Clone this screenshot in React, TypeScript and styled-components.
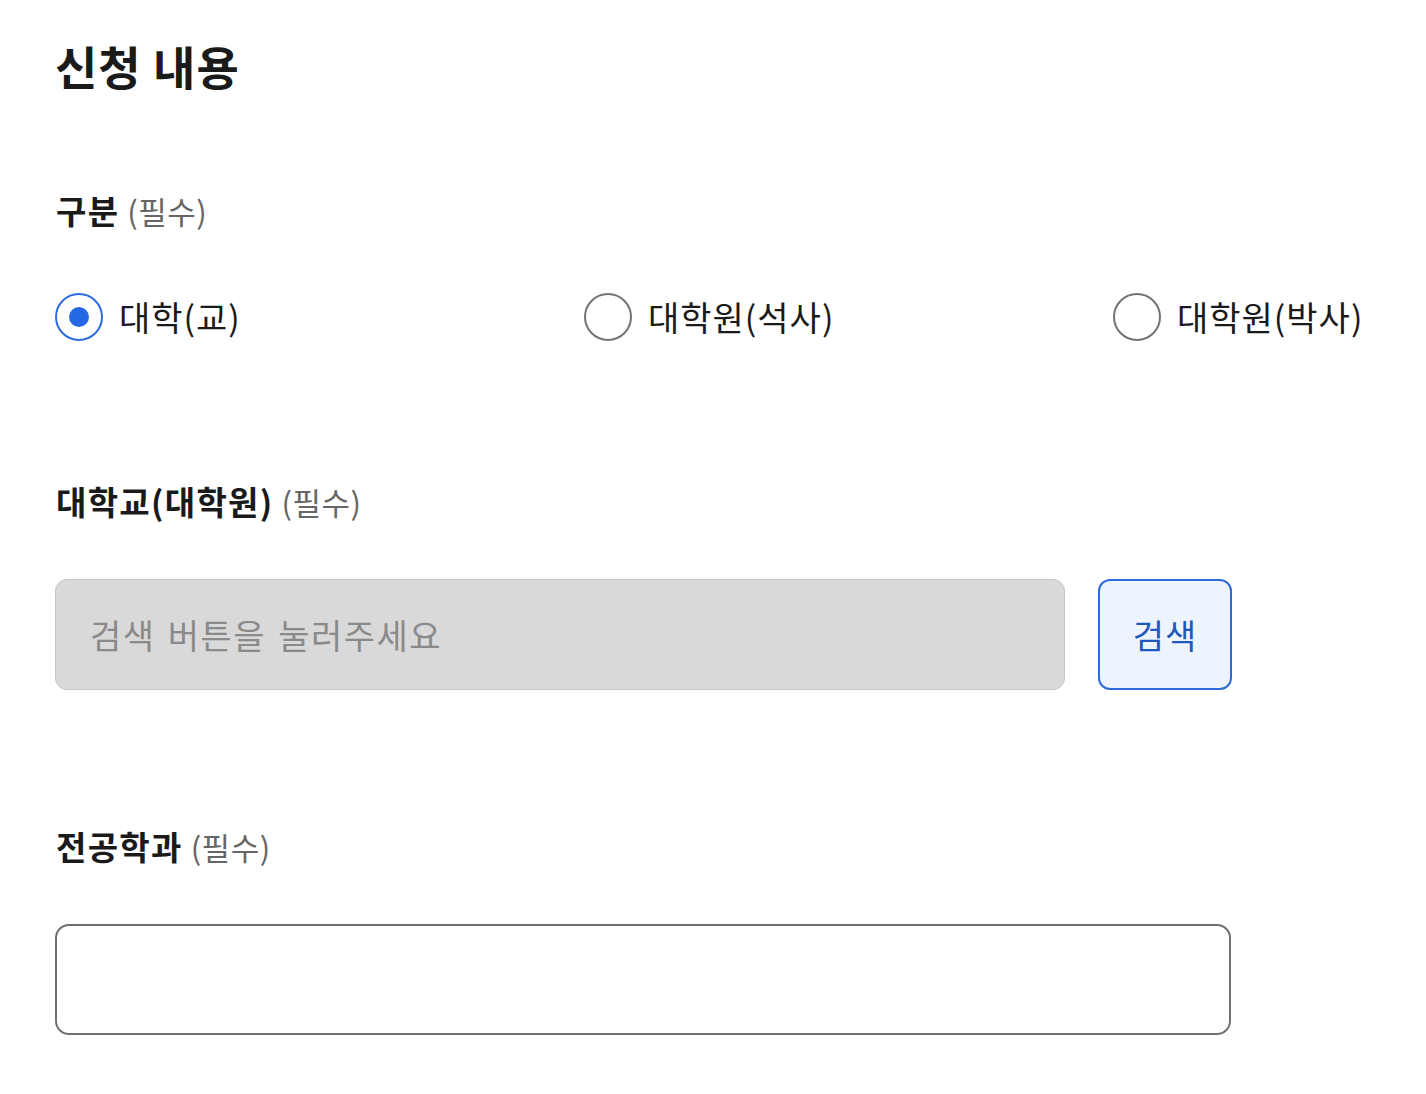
import React, { useState } from "react";
import styled, { createGlobalStyle } from "styled-components";

const GlobalStyle = createGlobalStyle`
  html, body {
    margin: 0;
    padding: 0;
    background: #ffffff;
  }
  body {
    font-family: "Noto Sans CJK KR", "Noto Sans", sans-serif;
    color: #1a1a1a;
  }
  * { box-sizing: border-box; }
`;

const Page = styled.div`
  padding: 35px 0 40px 55px;
`;

const Title = styled.h1`
  margin: 0;
  font-size: 46px;
  line-height: 60px;
  font-weight: 700;
  color: #1a1a1a;
  letter-spacing: 1px;
`;

const Section = styled.section<{ $top: number }>`
  margin-top: ${(p) => p.$top}px;
  display: flex;
  flex-direction: column;
`;

const Label = styled.div<{ $gap: number }>`
  font-size: 33px;
  line-height: 48px;
  font-weight: 700;
  color: #1a1a1a;
  margin-bottom: ${(p) => p.$gap}px;
  padding-left: 1px;
  letter-spacing: 1.3px;
`;

const Required = styled.span`
  font-size: 31px;
  font-weight: 400;
  color: #666666;
  margin-left: 8px;
  letter-spacing: 0.5px;
`;

const RadioGroup = styled.div`
  display: grid;
  grid-template-columns: 529px 529px auto;
`;

const RadioOption = styled.label`
  display: flex;
  align-items: center;
  gap: 16px;
  cursor: pointer;
  height: 48px;
`;

const HiddenInput = styled.input`
  position: absolute;
  opacity: 0;
  width: 0;
  height: 0;
`;

const RadioCircle = styled.span<{ $checked: boolean }>`
  width: 48px;
  height: 48px;
  border-radius: 50%;
  border: 2px solid ${(p) => (p.$checked ? "#2e6be0" : "#737373")};
  display: flex;
  align-items: center;
  justify-content: center;
  flex-shrink: 0;
  &::after {
    content: "";
    width: 20px;
    height: 20px;
    border-radius: 50%;
    background: #2468e6;
    display: ${(p) => (p.$checked ? "block" : "none")};
  }
`;

const RadioText = styled.span`
  font-size: 34px;
  line-height: 48px;
  color: #1a1a1a;
  font-weight: 400;
  letter-spacing: 1px;
  white-space: nowrap;
`;

const SearchRow = styled.div`
  display: flex;
  gap: 33px;
  align-items: stretch;
`;

const ReadonlyInput = styled.input`
  width: 1010px;
  height: 111px;
  background: #d9d9d9;
  border: 1px solid #c4c4c4;
  border-radius: 12px;
  padding: 0 34px;
  font-family: "Noto Sans CJK KR", "Noto Sans", sans-serif;
  font-size: 34px;
  letter-spacing: 1.5px;
  word-spacing: 3px;
  color: #888888;
  outline: none;
  &::placeholder {
    color: #8a8a8a;
  }
`;

const SearchButton = styled.button`
  width: 134px;
  height: 111px;
  background: #eef4fd;
  border: 2px solid #2d6bdc;
  border-radius: 12px;
  font-family: "Noto Sans CJK KR", "Noto Sans", sans-serif;
  font-size: 34px;
  letter-spacing: 1px;
  color: #1f58bd;
  cursor: pointer;
  padding: 0;
`;

const TextInput = styled.input`
  width: 1176px;
  height: 111px;
  background: #ffffff;
  border: 2px solid #707070;
  border-radius: 14px;
  padding: 0 34px;
  font-family: "Noto Sans CJK KR", "Noto Sans", sans-serif;
  font-size: 34px;
  color: #1a1a1a;
  outline: none;
`;

const options = ["대학(교)", "대학원(석사)", "대학원(박사)"];

export default function App() {
  const [selected, setSelected] = useState(0);
  return (
    <>
      <GlobalStyle />
      <Page>
        <Title>신청 내용</Title>

        <Section $top={91}>
          <Label $gap={58}>
            구분<Required>(필수)</Required>
          </Label>
          <RadioGroup>
            {options.map((o, i) => (
              <RadioOption key={o}>
                <HiddenInput
                  type="radio"
                  name="type"
                  checked={selected === i}
                  onChange={() => setSelected(i)}
                />
                <RadioCircle $checked={selected === i} />
                <RadioText>{o}</RadioText>
              </RadioOption>
            ))}
          </RadioGroup>
        </Section>

        <Section $top={136}>
          <Label $gap={53}>
            대학교(대학원)<Required>(필수)</Required>
          </Label>
          <SearchRow>
            <ReadonlyInput readOnly placeholder="검색 버튼을 눌러주세요" />
            <SearchButton type="button">검색</SearchButton>
          </SearchRow>
        </Section>

        <Section $top={132}>
          <Label $gap={53}>
            전공학과<Required>(필수)</Required>
          </Label>
          <TextInput type="text" />
        </Section>
      </Page>
    </>
  );
}
